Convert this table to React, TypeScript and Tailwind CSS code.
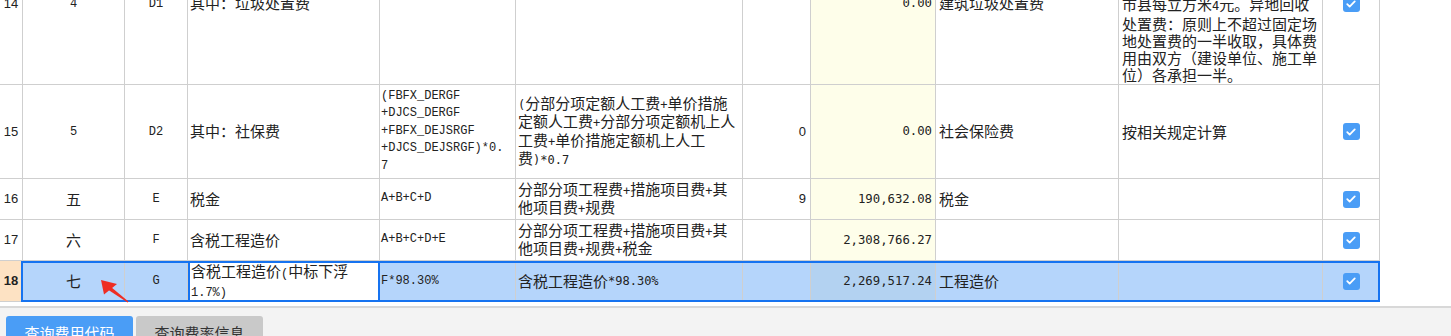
import React from "react";

const GRID =
  "grid grid-cols-[23px_102px_63px_192px_136px_227px_68px_125px_183px_204px_57px]";
const CELL = "flex items-center overflow-hidden border-b border-r border-[#cfcfcf]";

const CJK = "font-['Noto_Sans_CJK_SC',sans-serif] text-[15px]";
const MONO = "font-['Liberation_Mono','Noto_Sans_CJK_SC',monospace] text-[12px]";
const SMONO = "font-['DejaVu_Sans_Mono','Noto_Sans_CJK_SC',monospace] text-[12px]";
const NUM = "font-['DejaVu_Sans_Mono',monospace] text-[12.3px]";
const SANS = "font-['Liberation_Sans',sans-serif] text-[13px]";

// splits a line into CJK and ascii runs, ascii runs get a narrower font
function Mixed({ text, latin }: { text: string; latin: string }) {
  const parts = text.split(/([\x20-\x7e]+)/).filter(Boolean);
  return (
    <>
      {parts.map((p, i) =>
        /^[\x20-\x7e]+$/.test(p) ? (
          <span key={i} className={`inline-block ${latin}`}>
            {p}
          </span>
        ) : (
          <span key={i} className="inline-block">
            {p}
          </span>
        )
      )}
    </>
  );
}

function Lines({ lines, latin, leading }: { lines: string[]; latin: string; leading: string }) {
  return (
    <div className="flex flex-col">
      {lines.map((l, i) => (
        <div key={i} className={`whitespace-nowrap ${leading}`}>
          <Mixed text={l} latin={latin} />
        </div>
      ))}
    </div>
  );
}

function Check() {
  return (
    <span className="flex h-[17px] w-[17px] items-center justify-center rounded-[3px] bg-[#4a9df6]">
      <svg viewBox="0 0 16 16" className="h-[12px] w-[12px]">
        <path
          d="M3 8.3l3.2 3.1L13 4.6"
          fill="none"
          stroke="#fff"
          strokeWidth="2.4"
          strokeLinecap="round"
          strokeLinejoin="round"
        />
      </svg>
    </span>
  );
}

type Row = {
  no: string;
  seq: string;
  code: string;
  name: string[];
  base: string[];
  desc: string[];
  rate: string;
  amount: string;
  kind: string;
  note: string[];
  h: string;
};

const rows: Row[] = [
  {
    no: "14",
    seq: "4",
    code: "D1",
    name: ["其中：垃圾处置费"],
    base: [],
    desc: [],
    rate: "",
    amount: "0.00",
    kind: "建筑垃圾处置费",
    note: [
      "建筑垃圾处置费：就地回收",
      "处置费：按照当地政府规定",
      "标准计取，无规定的，省会",
      "城市每立方米6元，其他",
      "市县每立方米4元。异地回收",
      "处置费：原则上不超过固定场",
      "地处置费的一半收取，具体费",
      "用由双方（建设单位、施工单",
      "位）各承担一半。",
    ],
    h: "h-[162px]",
  },
  {
    no: "15",
    seq: "5",
    code: "D2",
    name: ["其中：社保费"],
    base: ["(FBFX_DERGF", "+DJCS_DERGF", "+FBFX_DEJSRGF", "+DJCS_DEJSRGF)*0.", "7"],
    desc: [
      "(分部分项定额人工费+单价措施",
      "定额人工费+分部分项定额机上人",
      "工费+单价措施定额机上人工",
      "费)*0.7",
    ],
    rate: "0",
    amount: "0.00",
    kind: "社会保险费",
    note: ["按相关规定计算"],
    h: "h-[94px]",
  },
  {
    no: "16",
    seq: "五",
    code: "E",
    name: ["税金"],
    base: ["A+B+C+D"],
    desc: ["分部分项工程费+措施项目费+其", "他项目费+规费"],
    rate: "9",
    amount: "190,632.08",
    kind: "税金",
    note: [],
    h: "h-[41px]",
  },
  {
    no: "17",
    seq: "六",
    code: "F",
    name: ["含税工程造价"],
    base: ["A+B+C+D+E"],
    desc: ["分部分项工程费+措施项目费+其", "他项目费+规费+税金"],
    rate: "",
    amount: "2,308,766.27",
    kind: "",
    note: [],
    h: "h-[41px]",
  },
];

function BodyRow({ r }: { r: Row }) {
  return (
    <div className={`${GRID} ${r.h}`}>
      <div className={`${CELL} ${SANS} justify-center`}>{r.no}</div>
      <div className={`${CELL} ${CJK} justify-center`}>
        <Mixed text={r.seq} latin={MONO} />
      </div>
      <div className={`${CELL} ${MONO} justify-center`}>{r.code}</div>
      <div className={`${CELL} ${CJK} pl-[2px]`}>
        <Lines lines={r.name} latin={MONO} leading="leading-[16.5px]" />
      </div>
      <div className={`${CELL} ${MONO} pl-[1px]`}>
        <Lines lines={r.base} latin={MONO} leading="leading-[17.5px]" />
      </div>
      <div className={`${CELL} ${CJK} pl-[2px]`}>
        <Lines lines={r.desc} latin={SMONO} leading="leading-[16.5px]" />
      </div>
      <div className={`${CELL} ${SANS} justify-end pr-[4px]`}>{r.rate}</div>
      <div className={`${CELL} ${NUM} justify-end bg-[#fefeea] pr-[3px]`}>{r.amount}</div>
      <div className={`${CELL} ${CJK} pl-[3px]`}>{r.kind}</div>
      <div className={`${CELL} ${CJK} pl-[3px]`}>
        <Lines lines={r.note} latin={SMONO} leading="leading-[17px]" />
      </div>
      <div className={`${CELL} justify-center`}>
        <Check />
      </div>
    </div>
  );
}

export default function App() {
  return (
    <div className="relative h-[336px] w-[1451px] overflow-hidden bg-white text-[#222]">
      <div className="-mt-[77px] w-[1380px]">
        {rows.map((r) => (
          <BodyRow key={r.no} r={r} />
        ))}

        {/* selected row */}
        <div className={`${GRID} relative h-[41px]`}>
          <div className={`${CELL} ${SANS} justify-center bg-[#fde2c3] font-bold`}>18</div>
          <div className={`${CELL} ${CJK} justify-center bg-[#b5d5fb]`}>七</div>
          <div className={`${CELL} ${MONO} justify-center bg-[#b5d5fb]`}>G</div>
          <div className={`flex items-center overflow-hidden border-x-2 border-[#1673f0] bg-white pl-[1px] ${CJK}`}>
            <Lines
              lines={["含税工程造价(中标下浮", "1.7%)"]}
              latin={MONO}
              leading="leading-[16px]"
            />
          </div>
          <div className={`${CELL} ${MONO} bg-[#b5d5fb] pl-[1px]`}>F*98.30%</div>
          <div className={`${CELL} ${CJK} bg-[#b5d5fb] pl-[2px]`}>
            <Mixed text="含税工程造价*98.30%" latin={SMONO} />
          </div>
          <div className={`${CELL} bg-[#b5d5fb]`} />
          <div className={`${CELL} ${NUM} justify-end bg-[#b3d2f1] pr-[3px]`}>2,269,517.24</div>
          <div className={`${CELL} ${CJK} bg-[#b5d5fb] pl-[3px]`}>工程造价</div>
          <div className={`${CELL} bg-[#b5d5fb]`} />
          <div className={`${CELL} justify-center bg-[#b5d5fb]`}>
            <Check />
          </div>

          {/* selection frame */}
          <div className="pointer-events-none absolute bottom-0 left-[21px] right-0 top-0 border-2 border-[#1673f0]" />

          {/* red annotation arrow */}
          <svg
            className="pointer-events-none absolute left-[95px] top-[15px] h-[32px] w-[40px]"
            viewBox="0 0 40 32"
          >
            <polygon points="12.7,13.6 15.4,10.4 33.4,25.6 32.6,26.4" fill="#ee2d24" />
            <polygon points="6,4 22,8 9,18.5" fill="#ee2d24" />
          </svg>
        </div>
      </div>

      {/* bottom toolbar */}
      <div className="mt-[4px] flex h-[40px] gap-[3px] border-t-2 border-[#d8d8d8] bg-[#f3f3f3] pl-[6px] pt-[8px]">
        <button
          className={`flex h-[34px] w-[127px] items-center justify-center rounded-[3px] bg-[#4a9df6] text-white ${CJK}`}
        >
          查询费用代码
        </button>
        <button
          className={`flex h-[34px] w-[127px] items-center justify-center rounded-[3px] bg-[#c9c9c9] text-[#333] ${CJK}`}
        >
          查询费率信息
        </button>
      </div>
    </div>
  );
}
